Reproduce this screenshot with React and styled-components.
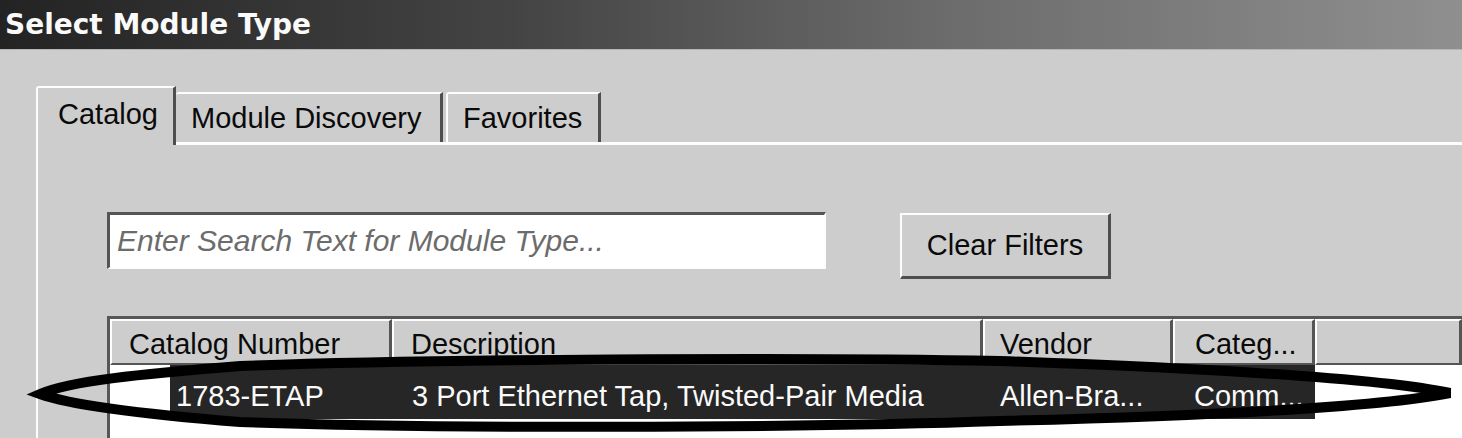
import React from "react";
import styled, { createGlobalStyle } from "styled-components";

const GlobalStyle = createGlobalStyle`
  html, body {
    margin: 0;
    padding: 0;
  }
  body {
    width: 1462px;
    height: 438px;
    overflow: hidden;
    background: #cdcdcd;
    font-family: "Liberation Sans", Arial, sans-serif;
  }
`;

const Dialog = styled.div`
  position: relative;
  width: 1462px;
  height: 438px;
  overflow: hidden;
  background: #cdcdcd;
  display: flex;
  flex-direction: column;
`;

const TitleBar = styled.div`
  height: 50px;
  flex-shrink: 0;
  box-sizing: border-box;
  padding-left: 5px;
  display: flex;
  align-items: center;
  background: linear-gradient(to right, #232323 0%, #444 35%, #6c6c6c 65%, #8f8f8f 100%);
  border-bottom: 1px solid #b5b5b5;
  color: #fafafa;
  font-family: "DejaVu Sans", Verdana, sans-serif;
  font-weight: bold;
  font-size: 28px;
  letter-spacing: 0;
`;

const Body = styled.div`
  flex: 1;
  display: flex;
  flex-direction: column;
  padding: 36px 0 0 36px;
`;

const TabStrip = styled.div`
  display: flex;
  align-items: flex-end;
  height: 56px;
  position: relative;
  z-index: 1;
`;

const Tab = styled.div`
  box-sizing: border-box;
  display: flex;
  align-items: center;
  width: ${(p) => p.$w}px;
  height: ${(p) => (p.$active ? 59 : 50)}px;
  margin-bottom: ${(p) => (p.$active ? -3 : 0)}px;
  margin-left: ${(p) => p.$gap || 0}px;
  padding-left: ${(p) => p.$pad}px;
  padding-bottom: ${(p) => (p.$active ? 5 : 0)}px;
  background: #cdcdcd;
  border-top: 2px solid #fdfdfd;
  border-left: ${(p) => (p.$edge ? "2px solid #fdfdfd" : "none")};
  border-right: 3px solid #4e4e4e;
  border-top-left-radius: 3px;
  font-size: 29px;
  color: #0a0a0a;
  white-space: nowrap;
`;

const Panel = styled.div`
  flex: 1;
  border-top: 3px solid #fdfdfd;
  border-left: 2px solid #fdfdfd;
  padding: 67px 0 0 69px;
  display: flex;
  flex-direction: column;
`;

const SearchRow = styled.div`
  display: flex;
  align-items: flex-start;
  gap: 74px;
`;

const SearchBox = styled.input`
  box-sizing: border-box;
  width: 719px;
  height: 57px;
  margin: 0;
  padding: 0 0 0 7px;
  background: #fff;
  border-top: 3px solid #555;
  border-left: 3px solid #555;
  border-right: 2px solid #fdfdfd;
  border-bottom: 2px solid #fdfdfd;
  outline: none;
  font-family: "Liberation Sans", Arial, sans-serif;
  font-size: 30px;
  &::placeholder {
    color: #6c6c6c;
    font-style: italic;
  }
`;

const ClearButton = styled.button`
  box-sizing: border-box;
  width: 211px;
  height: 66px;
  margin: 1px 0 0;
  padding: 0;
  background: #cdcdcd;
  border-top: 2px solid #fdfdfd;
  border-left: 2px solid #fdfdfd;
  border-right: 3px solid #4e4e4e;
  border-bottom: 3px solid #4e4e4e;
  font-family: "Liberation Sans", Arial, sans-serif;
  font-size: 29px;
  color: #0a0a0a;
`;

const List = styled.div`
  flex: 1;
  margin-top: 37px;
  background: #fff;
  border-top: 3px solid #575757;
  border-left: 3px solid #575757;
  display: flex;
  flex-direction: column;
`;

const HeaderRow = styled.div`
  display: flex;
  height: 46px;
`;

const HeaderCell = styled.div`
  box-sizing: border-box;
  width: ${(p) => (p.$w ? `${p.$w}px` : "auto")};
  flex: ${(p) => (p.$w ? "none" : 1)};
  display: flex;
  align-items: center;
  padding: 4px 0 0 ${(p) => p.$pad || 0}px;
  background: #cdcdcd;
  border-top: 2px solid #fdfdfd;
  border-left: 2px solid #fdfdfd;
  border-right: 3px solid #555;
  border-bottom: 2px solid #555;
  font-size: 29px;
  color: #0a0a0a;
  white-space: nowrap;
  overflow: hidden;
`;

const Row = styled.div`
  display: flex;
  height: 54px;
  padding-left: 60px;
`;

const Cell = styled.div`
  box-sizing: border-box;
  width: ${(p) => p.$w}px;
  display: flex;
  align-items: center;
  padding: 8px 0 0 ${(p) => p.$pad}px;
  background: ${(p) => (p.$selected ? "#262626" : "transparent")};
  color: ${(p) => (p.$selected ? "#fafafa" : "#0a0a0a")};
  font-size: 29px;
  white-space: nowrap;
`;

const Annotation = styled.svg`
  position: absolute;
  left: 0;
  top: 0;
  pointer-events: none;
`;

const headers = [
  { label: "Catalog Number", w: 282, pad: 17 },
  { label: "Description", w: 591, pad: 17 },
  { label: "Vendor", w: 190, pad: 15 },
  { label: "Categ...", w: 142, pad: 20 },
  { label: "" },
];

const row = [
  { text: "1783-ETAP", w: 222, pad: 6 },
  { text: "3 Port Ethernet Tap, Twisted-Pair Media", w: 591, pad: 20 },
  { text: "Allen-Bra...", w: 190, pad: 17 },
  { text: "Comm...", w: 142, pad: 21 },
];

export default function App() {
  return (
    <Dialog>
      <GlobalStyle />
      <TitleBar>Select Module Type</TitleBar>
      <Body>
        <TabStrip>
          <Tab $active $edge $w={140} $pad={20}>
            Catalog
          </Tab>
          <Tab $w={267} $pad={15}>
            Module Discovery
          </Tab>
          <Tab $edge $gap={3} $w={155} $pad={15}>
            Favorites
          </Tab>
        </TabStrip>
        <Panel>
          <SearchRow>
            <SearchBox placeholder="Enter Search Text for Module Type..." />
            <ClearButton>Clear Filters</ClearButton>
          </SearchRow>
          <List>
            <HeaderRow>
              {headers.map((h, i) => (
                <HeaderCell key={i} $w={h.w} $pad={h.pad}>
                  {h.label}
                </HeaderCell>
              ))}
            </HeaderRow>
            <Row>
              {row.map((c, i) => (
                <Cell key={i} $selected $w={c.w} $pad={c.pad}>
                  {c.text}
                </Cell>
              ))}
            </Row>
          </List>
        </Panel>
      </Body>
      <Annotation width="1462" height="438" viewBox="0 0 1462 438">
        <path
          d="M40,394 C70,381 140,374 240,366 C420,359 800,357 1000,361 C1200,368 1380,378 1450,393 C1380,407 1200,416 1000,421 C800,428 420,429 240,422 C140,414 70,405 40,394 Z"
          fill="none"
          stroke="#000"
          strokeWidth="10"
          strokeLinejoin="miter"
        />
      </Annotation>
    </Dialog>
  );
}
